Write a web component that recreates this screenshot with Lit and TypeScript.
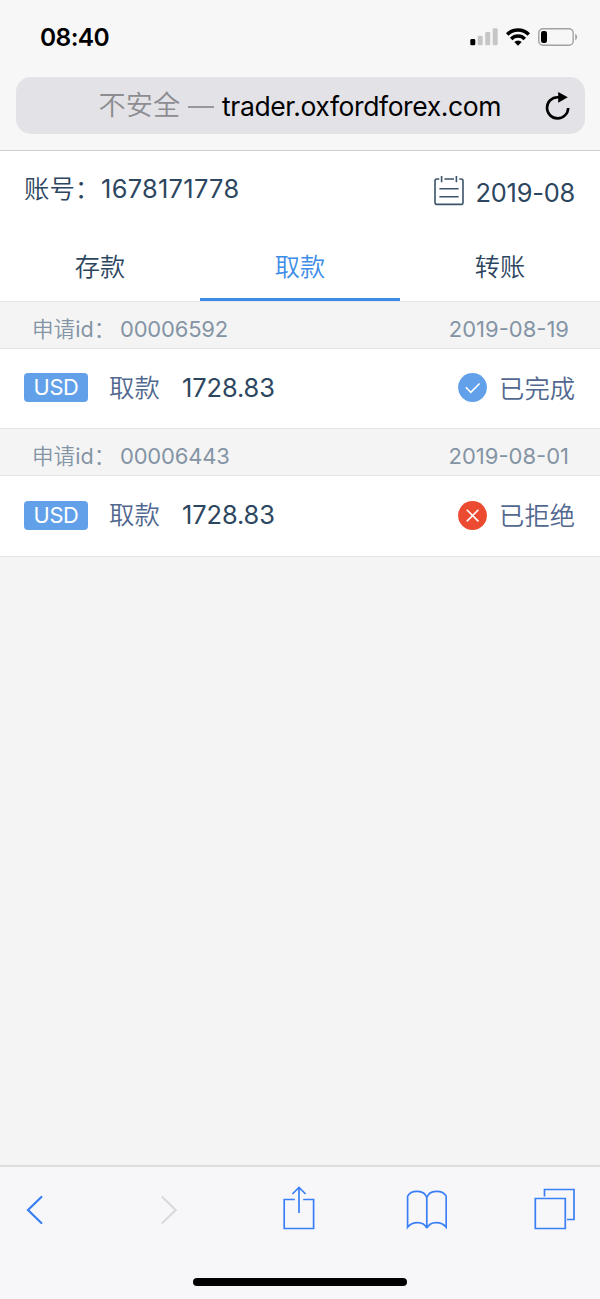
import { LitElement, html, css, svg } from "lit";
import { customElement, property, state } from "lit/decorators.js";
import { classMap } from "lit/directives/class-map.js";

type Status = "done" | "rejected";

interface Entry {
  id: string;
  date: string;
  currency: string;
  kind: string;
  amount: string;
  status: Status;
  label: string;
}

@customElement("status-bar")
class StatusBar extends LitElement {
  static styles = css`
    :host { display: flex; justify-content: space-between; height: 77px; box-sizing: border-box; padding: 22px 22px 0 40px; }
    .time { font-size: 24.5px; font-weight: 600; line-height: 30px; letter-spacing: -0.6px; color: #000; }
    .icons { display: block; margin-top: 5px; }
  `;
  render() {
    return html`
      <span class="time">08:40</span>
      <svg class="icons" width="108" height="20" viewBox="470 27 108 20">
        <rect x="470.3" y="39" width="5" height="6.3" rx="1.4" fill="#000" />
        <g fill="#c6c6c7">
          <rect x="477.7" y="35.7" width="5" height="9.6" rx="1.2" />
          <rect x="485.2" y="32" width="5" height="13.3" rx="1.2" />
          <rect x="492.7" y="28.3" width="5" height="17" rx="1.2" />
        </g>
        <g fill="none" stroke="#000" stroke-width="3.5">
          <path d="M507.2 34.4a15.4 15.4 0 0 1 21.6 0" />
          <path d="M511.2 38.9a9.6 9.6 0 0 1 13.6 0" />
        </g>
        <path d="M514.3 42.1a5.3 5.3 0 0 1 7.4 0L518 45.8z" fill="#000" />
        <rect x="538.8" y="28.7" width="34.4" height="16.6" rx="4.2" fill="none" stroke="#a2a2a3" stroke-width="1.4" />
        <rect x="541" y="31" width="6" height="12" rx="2.2" fill="#000" />
        <path d="M575.2 33.8q2 .8 2 3.2t-2 3.2z" fill="#a2a2a3" />
      </svg>
    `;
  }
}

@customElement("address-bar")
class AddressBar extends LitElement {
  @property() note = "";
  @property() domain = "";
  static styles = css`
    :host { display: flex; height: 73px; box-sizing: content-box; padding: 0 15.5px; border-bottom: 1px solid #cdcdcf; align-items: flex-start; }
    .field { flex: 1; display: flex; align-items: center; height: 57px; box-sizing: border-box; padding: 0 14px 0 83px; border-radius: 15px; background: #e3e2e7; }
    .note { font-size: 27.2px; font-weight: 350; line-height: 40px; padding-top: 1px; color: #8d8d91; white-space: pre; }
    .dash { width: 26px; height: 2px; margin: 3px 8px 0 8px; background: #98989c; }
    .domain { flex: 1; font-size: 26.5px; line-height: 40px; letter-spacing: -0.4px; color: #000; white-space: nowrap; }
    .reload { display: block; }
  `;
  render() {
    return html`
      <div class="field">
        <span class="note">${this.note}</span><span class="dash"></span>
        <span class="domain">${this.domain}</span>
        <svg class="reload" width="26" height="30" viewBox="545 91 26 30">
          <path d="M559.2 97.2h-1.6a10.6 10.6 0 1 0 10.6 10.8" fill="none" stroke="#000" stroke-width="2.6" />
          <path d="M558.2 92l9.6 5.2-9.6 5.6z" fill="#000" />
        </svg>
      </div>
    `;
  }
}

@customElement("account-header")
class AccountHeader extends LitElement {
  @property() account = "";
  @property() month = "";
  static styles = css`
    :host { display: flex; justify-content: space-between; height: 80px; padding: 0 25px 0 24px; box-sizing: border-box; background: #fff; color: #2d4660; font-size: 25.4px; line-height: 32px; }
    .account, .month { display: flex; }
    .account { padding-top: 22px; }
    .month { padding-top: 26px; letter-spacing: -0.2px; }
    .label { width: 77px; white-space: nowrap; font-weight: 350; }
    .number { letter-spacing: 0.3px; }
    .calendar { display: block; margin: -1px 11.5px 0 0; }
  `;
  render() {
    return html`
      <div class="account"><span class="label">账号：</span><span class="number">${this.account}</span></div>
      <div class="month">
        <svg class="calendar" width="30" height="30" viewBox="434 176 30 30">
          <g fill="none" stroke="#3b536b" stroke-width="1.6">
            <path d="M439.3 179H437a2 2 0 0 0-2 2v21.4a2 2 0 0 0 2 2h24a2 2 0 0 0 2-2V181a2 2 0 0 0-2-2h-1.7M444.4 179h9.6M441.6 176v6.2M456.4 176v6.2M439.4 188.7h19.2M439.4 196.7h19.2" />
          </g>
        </svg>
        <span>${this.month}</span>
      </div>
    `;
  }
}

@customElement("tab-strip")
class TabStrip extends LitElement {
  @property({ attribute: false }) tabs: string[] = [];
  @property({ type: Number }) active = 0;
  static styles = css`
    :host { display: grid; grid-template-columns: repeat(3, 1fr); height: 70px; background: #fff; border-bottom: 1px solid #e8e8e8; }
    .tab { box-sizing: border-box; height: 70px; padding-top: 20px; text-align: center; font-size: 25.2px; font-weight: 350; line-height: 32px; color: #2d4660; cursor: pointer; }
    .active { color: #3d8de8; border-bottom: 3px solid #3d8de8; }
  `;
  private pick(i: number) {
    this.dispatchEvent(new CustomEvent("pick", { detail: i }));
  }
  render() {
    return this.tabs.map((t, i) => html`<div class=${classMap({ tab: true, active: i === this.active })} @click=${() => this.pick(i)}>${t}</div>`);
  }
}

const mark = (s: Status) =>
  s === "done"
    ? svg`<circle cx="14.5" cy="14.5" r="14.4" fill="#62a1ea"/><path d="M7.8 14.3l5 5 8.8-8.8" fill="none" stroke="#fff" stroke-width="1.6"/>`
    : svg`<circle cx="14.5" cy="14.5" r="14.4" fill="#ed4b31"/><path d="M8.8 8.8l11.6 11.6M20.4 8.8L8.8 20.4" fill="none" stroke="#fff" stroke-width="1.6"/>`;

@customElement("record-item")
class RecordItem extends LitElement {
  @property({ attribute: false }) entry!: Entry;
  static styles = css`
    :host { display: block; }
    .head { display: flex; justify-content: space-between; height: 46px; box-sizing: border-box; padding: 13px 31px 0 32px; font-size: 22px; line-height: 28px; color: #8494a5; }
    .id { display: flex; }
    .caption { width: 88px; white-space: nowrap; font-size: 21.6px; }
    .cjk { font-weight: 350; }
    .digits { letter-spacing: -0.2px; }
    .body { display: flex; align-items: center; height: 81.25px; box-sizing: border-box; padding: 0 25px 1.5px 24px; background: #fff; border: 0 solid #e6e6e6; border-width: 1px 0; }
    .badge { width: 64px; height: 29px; border-radius: 4px; background: #62a1ea; color: #fff; font-size: 21.8px; line-height: 29px; text-align: center; letter-spacing: -0.3px; }
    .kind { margin-left: 21px; width: 73px; font-size: 25.4px; font-weight: 350; color: #52688f; line-height: 32px; }
    .amount { flex: 1; font-size: 25.4px; color: #2d4660; line-height: 32px; letter-spacing: -0.1px; }
    .mark { display: block; margin-right: 12px; }
    .label { padding-top: 2px; font-size: 25.3px; font-weight: 350; color: #52688f; line-height: 32px; }
  `;
  render() {
    const e = this.entry;
    return html`
      <div class="head">
        <div class="id"><span class="caption"><span class="cjk">申请</span>id<span class="cjk">：</span></span><span class="digits">${e.id}</span></div>
        <span>${e.date}</span>
      </div>
      <div class="body">
        <span class="badge">${e.currency}</span>
        <span class="kind">${e.kind}</span>
        <span class="amount">${e.amount}</span>
        <svg class="mark" width="29" height="29" viewBox="0 0 29 29">${mark(e.status)}</svg>
        <span class="label">${e.label}</span>
      </div>
    `;
  }
}

@customElement("browser-toolbar")
class BrowserToolbar extends LitElement {
  static styles = css`
    :host { display: flex; flex-direction: column; align-items: center; height: 134px; box-sizing: border-box; border-top: 2px solid #dededf; background: #f7f7f9; }
    .buttons { display: flex; align-items: center; width: 100%; height: 86px; box-sizing: border-box; padding-left: 26px; }
    .icon { display: block; fill: none; stroke: #3a7ff6; stroke-width: 1.7; }
    .thick { stroke-width: 2.2; stroke-linecap: round; }
    .disabled { stroke: #dadadc; margin-left: 116px; }
    .share { margin-left: 105px; }
    .book { margin-left: 91px; }
    .pages { margin-left: 87px; }
    .home { width: 214px; height: 8px; margin-top: 25px; border-radius: 4px; background: #000; }
  `;
  render() {
    return html`
      <div class="buttons">
        <svg class="icon thick" width="18" height="44" viewBox="26 1188 18 44"><path d="M41.4 1197L28 1210l13.4 13" /></svg>
        <svg class="icon thick disabled" width="18" height="44" viewBox="160 1188 18 44"><path d="M162.3 1197l13.4 13-13.4 13" /></svg>
        <svg class="icon share" width="32" height="48" viewBox="283 1186 32 48">
          <path d="M294.8 1199.5h-10.6v29h29.4v-29h-10.4M299 1213v-25.4M292.4 1194l6.6-6.6 6.6 6.6" />
        </svg>
        <svg class="icon book" width="41" height="44" viewBox="406 1188 41 44">
          <path d="M426.8 1228.2v-30.6c-2.6-8-15.6-8-19.2-1.4v31c4.4-5.6 15.6-7 19.2 1M426.8 1197.6c2.6-8 15.6-8 19.4-1.4v31c-4.4-5.6-15.6-7-19.4 1" />
        </svg>
        <svg class="icon pages" width="41" height="44" viewBox="534 1188 41 44">
          <path d="M535.3 1198.5h30v30h-30zM544.5 1196.6v-7.1H574v30h-7" />
        </svg>
      </div>
      <div class="home"></div>
    `;
  }
}

@customElement("app-root")
class AppRoot extends LitElement {
  @state() private active = 1;
  private entries: Entry[] = [
    { id: "00006592", date: "2019-08-19", currency: "USD", kind: "取款", amount: "1728.83", status: "done", label: "已完成" },
    { id: "00006443", date: "2019-08-01", currency: "USD", kind: "取款", amount: "1728.83", status: "rejected", label: "已拒绝" },
  ];
  static styles = css`
    :host { display: flex; flex-direction: column; width: 600px; height: 1299px; overflow: hidden; background: #f7f7f7; font-family: Inter, "Noto Sans CJK SC", sans-serif; }
    .page { flex: 1; background: #f4f4f4; }
  `;
  render() {
    return html`
      <status-bar></status-bar>
      <address-bar note="不安全" domain="trader.oxfordforex.com"></address-bar>
      <main class="page">
        <account-header account="1678171778" month="2019-08"></account-header>
        <tab-strip .tabs=${["存款", "取款", "转账"]} .active=${this.active} @pick=${(e: CustomEvent) => (this.active = e.detail)}></tab-strip>
        ${this.entries.map((e) => html`<record-item .entry=${e}></record-item>`)}
      </main>
      <browser-toolbar></browser-toolbar>
    `;
  }
}
